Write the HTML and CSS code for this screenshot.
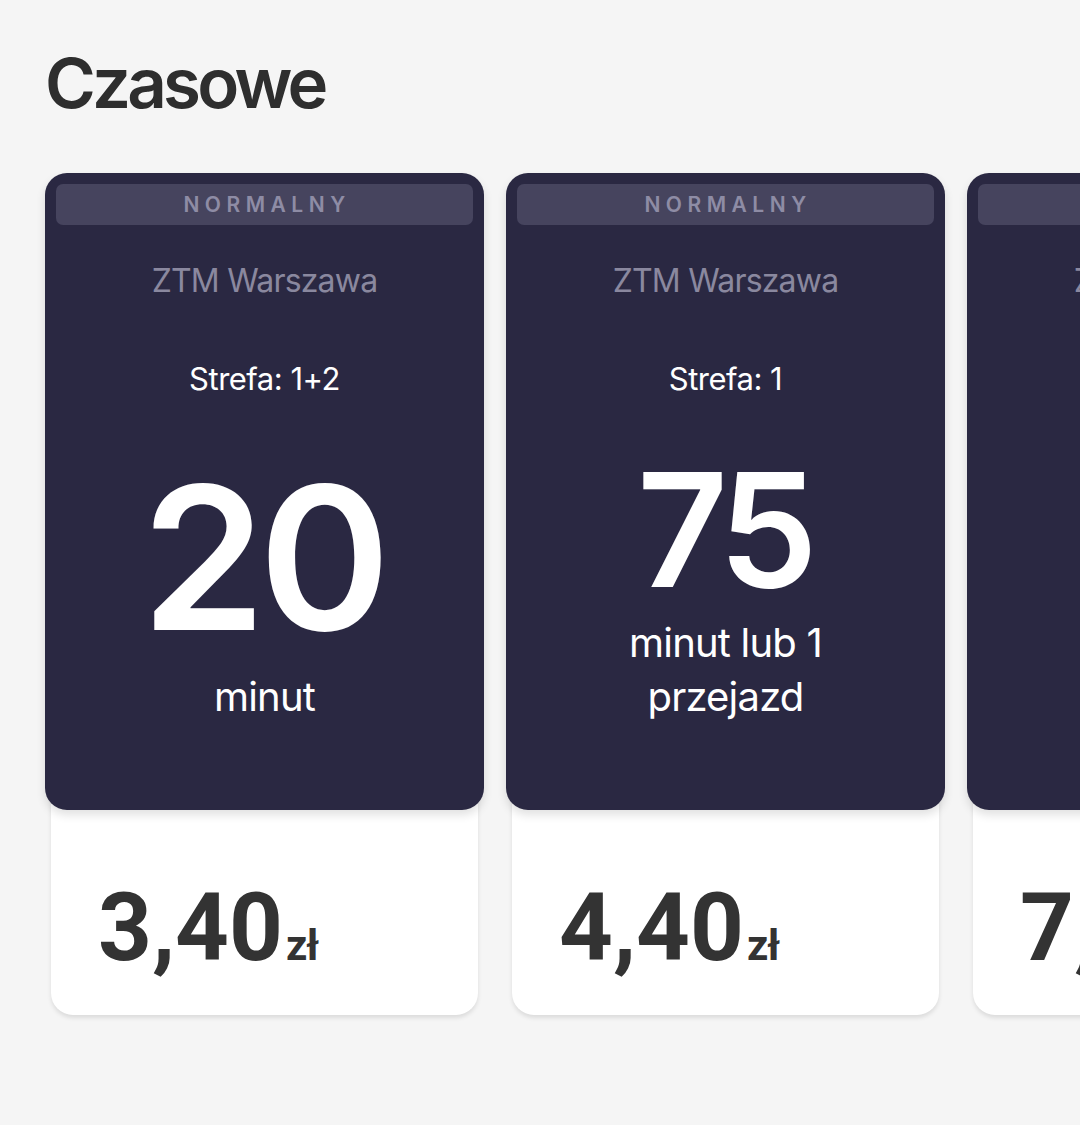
FILE: index.html
```html
<!DOCTYPE html>
<html lang="pl">
<head>
<meta charset="utf-8">
<title>Czasowe</title>
<link rel="stylesheet" href="styles.css">
</head>
<body>
<main class="page">
  <h1 class="title">Czasowe</h1>
  <div class="cards">
    <article class="card">
      <div class="card-top">
        <div class="badge">NORMALNY</div>
        <div class="operator">ZTM Warszawa</div>
        <div class="zone">Strefa: 1+2</div>
        <div class="value">
          <div class="num">20</div>
          <div class="unit">minut</div>
        </div>
      </div>
      <div class="card-bottom">
        <span class="price">3,40</span><span class="cur">zł</span>
      </div>
    </article>
    <article class="card">
      <div class="card-top">
        <div class="badge">NORMALNY</div>
        <div class="operator">ZTM Warszawa</div>
        <div class="zone">Strefa: 1</div>
        <div class="value">
          <div class="num num-sm">75</div>
          <div class="unit">minut lub 1<br>przejazd</div>
        </div>
      </div>
      <div class="card-bottom">
        <span class="price">4,40</span><span class="cur">zł</span>
      </div>
    </article>
    <article class="card">
      <div class="card-top">
        <div class="badge">NORMALNY</div>
        <div class="operator">ZTM Warszawa</div>
        <div class="zone">Strefa: 1+2</div>
        <div class="value">
          <div class="num num-sm">90</div>
          <div class="unit">minut</div>
        </div>
      </div>
      <div class="card-bottom">
        <span class="price">7,00</span><span class="cur">zł</span>
      </div>
    </article>
  </div>
</main>
</body>
</html>
```
FILE: styles.css
```css
html, body {
  margin: 0;
  padding: 0;
  background: #f5f5f5;
  overflow: hidden;
}
body {
  width: 1080px;
  height: 1125px;
  font-family: Inter, "Noto Sans", sans-serif;
}
.page {
  padding: 48px 0 0 45px;
}
.title {
  margin: 0;
  font-size: 69px;
  line-height: 70px;
  font-weight: 600;
  letter-spacing: -3.8px;
  color: #2e2e2e;
}
.cards {
  display: flex;
  gap: 22px;
  margin-top: 55px;
}
.card {
  flex: 0 0 439px;
  width: 439px;
  display: flex;
  flex-direction: column;
}
.card-top {
  position: relative;
  z-index: 1;
  height: 637px;
  box-sizing: border-box;
  background: #2a2842;
  border-radius: 22px;
  padding: 11px 11px 86px;
  display: flex;
  flex-direction: column;
  align-items: center;
  color: #fff;
  box-shadow: 0 5px 10px rgba(0, 0, 0, 0.12);
}
.badge {
  align-self: stretch;
  height: 41px;
  border-radius: 7px;
  background: #46445e;
  color: #8e8ca5;
  font-size: 21px;
  font-weight: 600;
  letter-spacing: 5.5px;
  display: flex;
  align-items: center;
  justify-content: center;
  padding-left: 5px;
}
.operator {
  margin-top: 36px;
  font-size: 32px;
  line-height: 40px;
  color: #8a889f;
  letter-spacing: -0.8px;
}
.zone {
  margin-top: 58px;
  font-size: 31px;
  line-height: 40px;
  letter-spacing: -0.5px;
}
.value {
  margin-top: auto;
  display: flex;
  flex-direction: column;
  align-items: center;
}
.num {
  font-size: 200px;
  line-height: 200px;
  font-weight: 600;
  letter-spacing: -7px;
  margin-bottom: 13px;
  padding-right: 4px;
}
.num-sm {
  font-size: 158px;
  line-height: 165px;
  letter-spacing: -8px;
  margin-bottom: 4px;
}
.unit {
  font-size: 40px;
  line-height: 54px;
  text-align: center;
  letter-spacing: -0.8px;
}
.card-bottom {
  margin: -20px 6px 0;
  height: 225px;
  box-sizing: border-box;
  padding: 91px 0 0 47px;
  background: #fff;
  border-radius: 0 0 22px 22px;
  box-shadow: 0 3px 4px rgba(0, 0, 0, 0.1);
  color: #333;
  font-family: Roboto, "Liberation Sans", sans-serif;
  font-weight: 700;
}
.price {
  font-size: 94px;
  line-height: 94px;
  letter-spacing: 0;
}
.cur {
  font-size: 42px;
  line-height: 94px;
  margin-left: 3px;
  letter-spacing: -1px;
}
```
